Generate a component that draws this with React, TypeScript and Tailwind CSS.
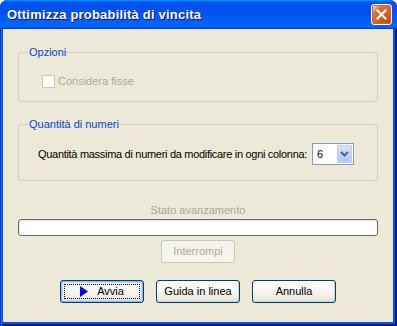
import { FC, ReactNode } from "react";

const GroupBox: FC<{ label: string; className?: string; children: ReactNode }> = ({
  label,
  className = "",
  children,
}) => (
  <fieldset className={`rounded-[3px] border border-[#d0d0bf] ${className}`}>
    <legend className="ml-[9px] px-[1px] text-[11px] leading-[14px] text-[#0046d5]">{label}</legend>
    {children}
  </fieldset>
);

const XpButton: FC<{ children: ReactNode; isDefault?: boolean; disabled?: boolean; className?: string }> = ({
  children,
  isDefault,
  disabled,
  className = "",
}) => {
  if (disabled) {
    return (
      <button className={`h-[23px] rounded-[3px] border border-[#c9c7ba] bg-[#f5f4ea] text-[11px] text-[#aca899] ${className}`}>
        {children}
      </button>
    );
  }
  return (
    <button
      className={`relative flex h-[23px] items-center justify-center rounded-[3px] border border-[#003c74] bg-[linear-gradient(180deg,#ffffff,#f3f2ec_60%,#e6e3d6)] text-[11px] text-black ${
        isDefault ? "shadow-[inset_0_0_0_1px_#9db9eb,inset_0_0_0_2px_#c4d6f8]" : "shadow-[inset_-1px_-1px_0_#d6d0c5]"
      } ${className}`}
    >
      {isDefault && <span className="pointer-events-none absolute inset-[3px] border border-dotted border-black" />}
      {children}
    </button>
  );
};

const App = () => {
  return (
    <div className="h-[326px] w-[397px] bg-white font-['Liberation_Sans',Arial,sans-serif]">
      <div className="flex h-full flex-col overflow-hidden rounded-t-[8px] bg-[#0855dd] shadow-[inset_1px_1px_#0831d9,inset_-1px_-1px_#00138c,inset_2px_2px_#166aee,inset_-2px_-2px_#001ea0]">
        {/* title bar */}
        <div className="flex h-[29px] shrink-0 items-center pl-[7px] pr-[5px] bg-[linear-gradient(180deg,#0997ff,#0053ee_8%,#0050ee_40%,#0066ff_88%,#0066ff_93%,#005bff_95%,#003dd7_96%,#003dd7)]">
          <span className="text-[13px] font-bold tracking-[0.2px] text-white [text-shadow:1px_1px_#0f1089]">
            Ottimizza probabilità di vincita
          </span>
          <button className="ml-auto flex h-[21px] w-[21px] items-center justify-center rounded-[3px] border border-white bg-[radial-gradient(circle_at_90%_90%,#cc4600,#dc6527_55%,#cd7546_70%,#ffccb2_90%,#fff)] shadow-[inset_0_0_0_1px_#e0593a]">
            <svg width="11" height="11" viewBox="0 0 11 11">
              <path d="M1.5 1.5 L9.5 9.5 M9.5 1.5 L1.5 9.5" stroke="#fff" strokeWidth="2.2" strokeLinecap="square" />
            </svg>
          </button>
        </div>

        {/* dialog body */}
        <div className="mb-[4px] ml-[3px] mr-[4px] flex flex-1 flex-col bg-[#ece9d8] px-[15px] text-[11px]">
          <GroupBox label="Opzioni" className="mt-[16px]">
            <div className="flex items-center pb-[13px] pl-[23px] pt-[16px]">
              <span className="h-[13px] w-[13px] border border-[#cac8bb] bg-white" />
              <span className="ml-[3px] leading-[13px] text-[#aca899]">Considera fisse</span>
            </div>
          </GroupBox>

          <GroupBox label="Quantità di numeri" className="mt-[15px]">
            <div className="flex items-center pb-[15px] pl-[19px] pr-[23px] pt-[12px]">
              <span className="flex-1 whitespace-nowrap tracking-[-0.3px] leading-[13px] text-black">
                Quantità massima di numeri da modificare in ogni colonna:
              </span>
              <div className="flex h-[22px] w-[42px] shrink-0 items-center border border-[#7f9db9] bg-white pr-[1px]">
                <span className="flex-1 pl-[4px] leading-[13px] text-black">6</span>
                <span className="flex h-[18px] w-[15px] items-center justify-center rounded-[1px] border border-[#bad0fb] bg-[linear-gradient(180deg,#d8e4fd,#c1d3fb_50%,#b2c7f7)]">
                  <svg width="9" height="6" viewBox="0 0 9 6">
                    <path d="M1 1 L4.5 4.5 L8 1" fill="none" stroke="#4d6185" strokeWidth="2" />
                  </svg>
                </span>
              </div>
            </div>
          </GroupBox>

          <div className="mt-[22px] text-center leading-[14px] text-[#aca899]">Stato avanzamento</div>
          <div className="mt-[2px] h-[17px] rounded-[3px] border border-[#686868] bg-white shadow-[inset_1px_1px_#e5e5e5]" />

          <div className="mt-[4px] flex justify-center">
            <XpButton disabled className="w-[74px]">
              Interrompi
            </XpButton>
          </div>

          <div className="mt-[17px] flex justify-center gap-[12px]">
            <XpButton isDefault className="w-[84px]">
              <svg width="8" height="11" viewBox="0 0 8 11" className="mr-[9px]">
                <path d="M0 0 L8 5.5 L0 11 Z" fill="#0000ff" />
              </svg>
              <span>Avvia</span>
            </XpButton>
            <XpButton className="w-[84px]">Guida in linea</XpButton>
            <XpButton className="w-[84px]">Annulla</XpButton>
          </div>
        </div>
      </div>
    </div>
  );
};

export default App;
